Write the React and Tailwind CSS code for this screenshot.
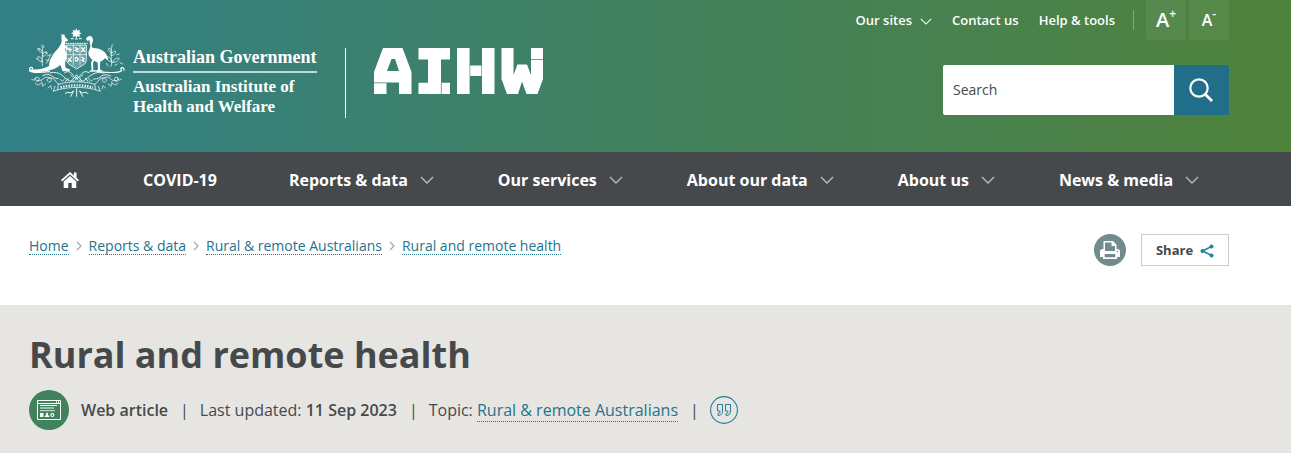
import React from "react";

const FONT = "font-['Open_Sans','Noto_Sans',sans-serif]";

function Chevron({ className }) {
  return (
    <svg viewBox="0 0 14 8" className={className} fill="none" stroke="currentColor" strokeWidth="1.3" aria-hidden="true">
      <path d="M1 1l6 6 6-6" />
    </svg>
  );
}

function Crest() {
  return (
    <svg viewBox="27 24 288 210" className="h-[70px] w-24 shrink-0" fill="none" stroke="#fff" strokeWidth="2" strokeLinecap="round" role="img" aria-label="Coat of arms">
      <path fill="#fff" stroke="none" d="M169 24l3 8 8-3-2 8 7 3-7 3 2 8-8-3-3 8-3-8-8 3 2-8-7-3 7-3-2-8 8 3z" />
      <path d="M154 56h6M166 57h6M178 56h6" strokeWidth="3" />
      <path fill="#fff" stroke="none" d="M122 40l6 6 4-5 3 9 9 10c1 4-4 4-9 5l0 9c5 4 7 7 12 11l-3 5-9-6c1 10 7 22 3 34-3 9-3 18-1 25l12 5v6h-21c-4-7-3-15-8-19-8 8-22 16-46 19-18 3-36 5-45 0l2-6c22 3 44-3 56-10 0-12 4-20 8-27 6-12 13-19 21-28 5-8 9-12 9-22 0-5-2-7 0-14z" />
      <path fill="#fff" stroke="none" d="M198 58c2-11 15-14 20-4 4 10-6 20-2 28 5 4 18 2 28 8 12 5 19 16 20 31l-10-6c-4 8-12 7-14 14v19l9 5h-20l5-6-1-19-10-6-4 7 1 22 5 4h-19l9-6-2-20 4-10c-12-9-15-20-8-32 5-9-1-17 0-27l-6 3z" />
      <path fill="#fff" fillOpacity=".25" d="M140 75h59v44c0 18-19 17-29 29-10-12-30-11-30-29z" strokeWidth="2.5" />
      <path d="M140 104h59M160 75v59M180 75v59" strokeWidth="2" />
      <path d="M146 89h9M150 84v11M166 83l8 4-8 4 8 4M185 83l9 12M194 83l-9 12M146 116l8 8M154 111l-8 13M165 115c4-5 9-2 9 3s-6 7-8 2M186 112l6 4-6 5 6 3" strokeWidth="4" />
      <path d="M137 70h65" strokeDasharray="3 4" strokeWidth="3" />
      <path d="M67 137c-3-20 5-37-1-58M67 125c-13 0-15-11-13-15 9 1 14 7 13 15zM67 109c10-1 15-7 13-14-9 1-13 6-13 14zM67 98c-10-2-13-8-12-13 8 2 12 6 12 13zM79 130c8-9 9-21 14-27M71 83c2-4 0-9-5-8M54 120l-5-5M59 88l-6-1M82 108l8-4M78 120l8 1M76 98l6 2" />
      <path d="M273 139c7-20-6-37 3-60M274 125c-13-2-15-10-13-15 9 1 13 7 13 15zM274 107c10-1 14-8 12-14-8 1-12 7-12 14zM275 98c-9-3-11-8-8-14 7 2 9 8 8 14zM278 127c14 0 20-8 19-13-9 0-17 4-19 13zM300 128l8 4M290 104l8-2M275 77l4-4M264 138l-5-8M292 132l-8 4" />
      <path d="M28 150c-1-10 13-10 9-2M312 151c2-12-14-9-8-1 6 10-57 9-81 2M28 151c4 7 33 7 60 4" strokeWidth="3.5" />
      <path d="M134 158c21-12 24 12 36 19 13-8 17-31 37-19M90 158c34-6 39 16 58 24 13 5 20-2 22-11 3 12 13 17 26 8 17-13 28-27 56-20M68 167c27-14 26 10 46 9M272 168c-29-14-28 12-49 9" strokeWidth="2.5" />
      <path d="M49 184c8 2 13-10 4-12-8-1-10 8 0 10 17 2 18-15 34-10 13 5 6 18-3 13-8-5 3-15 14-10 10 5 10 16 20 18M292 184c-8 2-13-10-4-12 8-1 10 8 0 10-17 2-18-15-34-10-13 5-6 18 3 13 8-5-3-15-14-10-10 5-10 16-20 18" strokeWidth="2.2" />
      <path d="M35 178l8 3 3-8M46 190l8 5 9-5M65 185l3 14 9-8M84 204l8-7 3 10M304 178l-8 3-3-8M294 190l-8 5-9-5M276 185l-3 14-9-8M257 204l-8-7-3 10M120 178l8 6 6-8M220 178l-8 6-6-8M152 164l6 8M188 164l-6 8" />
      <path d="M116 193c28-10 79-10 108 0l3 16c-35-9-76-9-113 0zM114 209l-14 5 5-15M227 209l14 5-6-15" strokeWidth="2.2" />
      <path d="M122 202c30-8 64-8 97 0" strokeWidth="7" strokeLinecap="butt" strokeDasharray="4 4" />
      <path d="M136 221c7-12 15 6 22-7M204 221c-8-12-17 6-24-7M170 206v23M161 213l-9 16M179 213l9 16M170 165l-15 17M170 165l15 17M145 175l-8 9M196 175l8 9" strokeWidth="2.8" />
    </svg>
  );
}

function Wordmark() {
  return (
    <svg viewBox="0 0 170 46" className="h-[46px] w-[170px]" fill="#fff" role="img" aria-label="AIHW">
      <path fillRule="evenodd" d="M9 0H28.500L37.500 24V46H25V34.500H0V24zM17.500 11L13 23H25L21 11z" />
      <path d="M0 35.300H12.500V46H0zM44.500 0H76V11.500H67V34.700H76V46H67.600V35H66.900V46H44.500V34.700H54V11.500H44.500z" />
      <path d="M83 0H95.600V46H83zM96.200 17.500H107.400V28H96.200zM108 0H120.500V46H108z" />
      <path d="M127.500 0H139.500V27L143.500 16.500H153L157 27V11.700H169V31L163.500 46H152.500L148 33.500L144 46H133L127.500 31zM157 0H169V11H157z" />
    </svg>
  );
}

const navItems = ["Reports & data", "Our services", "About our data", "About us", "News & media"];
const crumbs = ["Home", "Reports & data", "Rural & remote Australians", "Rural and remote health"];

export default function App() {
  return (
    <div className={`${FONT} min-h-screen bg-white text-[#45494c]`}>
      <header>
        <div className="flex h-[152px] justify-between bg-linear-to-r from-[#318087] via-[#42815e] to-[#4f823b] pr-[62px] pl-[29px] text-white">
          <a href="#home" className="flex items-start pt-7" aria-label="Australian Institute of Health and Welfare">
            <Crest />
            <span className="mt-[15px] ml-2 block font-['Liberation_Serif',serif] text-[18px] leading-5 font-bold">
              <span className="block border-b-2 border-white/70 pt-1 pb-1">Australian Government</span>
              <span className="mt-1 block text-[17px]">Australian Institute of<br />Health and Welfare</span>
            </span>
            <span className="mx-7 mt-5 h-[70px] w-px bg-white" />
            <span className="mt-5"><Wordmark /></span>
          </a>

          <div className="flex flex-col items-end">
            <div className="flex h-10 items-center text-[13px] font-semibold">
              <div className="flex items-center gap-5 pt-0.5">
                <button type="button" className="flex items-center gap-2">
                  Our sites <Chevron className="h-[7px] w-3" />
                </button>
                <a href="#contact">Contact us</a>
                <a href="#help">Help &amp; tools</a>
              </div>
              <span className="mr-3 ml-[18px] h-5 w-px bg-white/30" />
              <button type="button" aria-label="Increase text size" className="flex h-10 w-10 items-center justify-center rounded-b-xs bg-white/6 text-xl font-semibold">
                A<sup className="text-xs">+</sup>
              </button>
              <button type="button" aria-label="Decrease text size" className="ml-[3px] flex h-10 w-10 items-center justify-center rounded-b-xs bg-white/6 text-base font-semibold">
                A<sup className="text-xs">-</sup>
              </button>
            </div>
            <form className="mt-[25px] flex h-[50px] w-[286px] overflow-hidden rounded-xs" onSubmit={(e) => e.preventDefault()}>
              <input type="search" aria-label="Search" placeholder="Search" className="min-w-0 flex-1 bg-white px-2.5 text-sm text-[#45494c] outline-none placeholder:text-[#45494c]" />
              <button type="submit" aria-label="Submit search" className="flex w-[55px] items-center justify-center bg-[#216e8a] pr-0.5">
                <svg viewBox="0 0 24 24" className="size-6" fill="none" stroke="currentColor" strokeWidth="2.200" aria-hidden="true">
                  <circle cx="10" cy="10" r="8.700" />
                  <path d="M16.200 16.200L23 23" strokeWidth="2.800" />
                </svg>
              </button>
            </form>
          </div>
        </div>

        <nav aria-label="Main" className="flex h-[54px] items-center bg-[#45494c] pt-0.5 pl-[29px] text-base font-bold whitespace-nowrap text-white">
          <a href="#home" aria-label="Home" className="px-8">
            <svg viewBox="0 0 18 16" className="h-4 w-[18px]" fill="currentColor" aria-hidden="true">
              <path d="M9 0L0 8l1.200 1.400L9 2.600l7.800 6.800L18 8l-2.500-2.200V.5h-2.600v3z" />
              <path d="M9 4L2.700 9.500V16h4.600v-5h3.400v5h4.600V9.500z" />
            </svg>
          </a>
          <a href="#covid" className="pr-10 pl-8">COVID-19</a>
          {navItems.map((label) => (
            <button key={label} type="button" className="flex items-center gap-3 px-8">
              {label}
              <Chevron className="h-2 w-[14px] text-[#c3bab0]" />
            </button>
          ))}
        </nav>
      </header>

      <div className="flex h-[99px] items-start justify-between pt-7 pr-[62px] pl-[29px]">
        <nav aria-label="Breadcrumb" className="pt-[3px]">
          <ol className="flex items-center text-sm leading-[17px] text-[#24748c]">
            {crumbs.map((label, i) => (
              <li key={label} className="flex items-center">
                {i > 0 && (
                  <svg viewBox="0 0 6 10" className="mx-[7px] h-2.5 w-1.5" fill="none" stroke="#a9a69f" strokeWidth="1.200" aria-hidden="true">
                    <path d="M1 1l4 4-4 4" />
                  </svg>
                )}
                <a href="#crumb" className="block border-b border-dotted border-[#24748c]">{label}</a>
              </li>
            ))}
          </ol>
        </nav>
        <div className="flex gap-[15px]">
          <button type="button" aria-label="Print" className="flex size-8 items-center justify-center rounded-full bg-[#728b8c]">
            <svg viewBox="0 0 20 20" className="size-5" aria-hidden="true">
              <path fill="#fff" d="M3.500 1h9.500L16.500 4.500V9h1.500L20 10.500V17h-3v2H3v-2H0v-6.500L2 9h1.500z" />
              <path fill="#728b8c" d="M5 2.500h6.500V6H15v5H5zM4.700 14h10.600v3.200H4.700z" />
              <circle cx="17.500" cy="11.500" r=".8" fill="#728b8c" />
            </svg>
          </button>
          <button type="button" className="flex h-8 w-[88px] items-center justify-center gap-[7px] border border-[#cfccc7] pt-0.5 text-[13px] font-bold">
            Share
            <svg viewBox="0 0 14 14" className="size-3.5" fill="#24809a" stroke="#24809a" aria-hidden="true">
              <path d="M11.500 2.500L2.500 7l9 4.500" fill="none" strokeWidth="1.500" />
              <circle cx="11.500" cy="2.500" r="1.600" /><circle cx="2.500" cy="7" r="1.600" /><circle cx="11.500" cy="11.500" r="1.600" />
            </svg>
          </button>
        </div>
      </div>

      <main className="min-h-[148px] bg-[#e7e5e1] pt-6 pr-[62px] pl-[29px]">
        <h1 className="text-4xl leading-[52px] font-bold">Rural and remote health</h1>
        <div className="mt-[9px] flex items-center text-base">
          <svg viewBox="0 0 40 40" className="mr-3 size-10" aria-hidden="true">
            <circle cx="20" cy="20" r="20" fill="#40825c" />
            <path d="M8.500 10.500h23v19h-23zM8.500 13.500h23" fill="none" stroke="#fff" />
            <path d="M27 12h1M29 12h1" stroke="#fff" strokeWidth="1.500" />
            <path d="M11 15.500h17M11 18h14" stroke="#fff" />
            <path d="M11 20.700h15" stroke="#fff" strokeWidth=".8" />
            <path d="M11 23h3.500v4H11zM18 23l2.500 4h-5z" fill="#fff" />
            <circle cx="18" cy="23.800" r="1" fill="#fff" />
            <circle cx="23.300" cy="25" r="1.500" fill="none" stroke="#fff" strokeWidth="1.200" />
          </svg>
          <span className="font-semibold">Web article</span>
          <span className="mr-[11px] ml-3">|</span>
          <span>Last updated: <span className="font-semibold">11 Sep 2023</span></span>
          <span className="mr-[11px] ml-3">|</span>
          <span>Topic: <a href="#topic" className="border-b border-dotted border-[#24748c] text-[#24748c]">Rural &amp; remote Australians</a></span>
          <span className="mr-[11px] ml-3">|</span>
          <button type="button" aria-label="Cite">
            <svg viewBox="0 0 28 28" className="size-7" fill="none" stroke="#24809a" aria-hidden="true">
              <circle cx="14" cy="14" r="13.400" strokeWidth="1.100" />
              <path d="M7.500 8.500h5v6.500c0 2.800-1.500 4.500-4.500 4.500v-2c1.500 0 2-.8 2-2.500H7.500zM15.500 8.500h5v6.500c0 2.800-1.500 4.500-4.500 4.500v-2c1.500 0 2-.8 2-2.500h-2.500z" strokeWidth="1" />
            </svg>
          </button>
        </div>
      </main>
    </div>
  );
}
